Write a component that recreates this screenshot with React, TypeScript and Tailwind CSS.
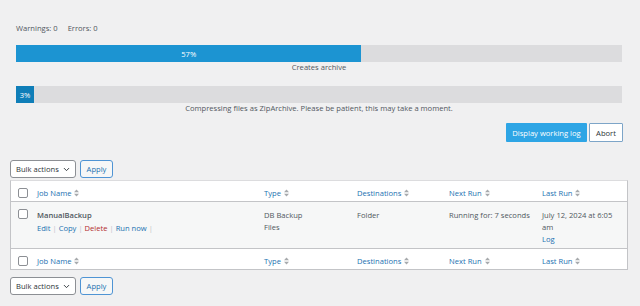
import { ChevronDown } from "lucide-react";

const cols = [
  { label: "Type", w: "w-[93px]" },
  { label: "Destinations", w: "w-[92px]" },
  { label: "Next Run", w: "w-[93px]" },
  { label: "Last Run", w: "flex-1" },
];

function SortIcon() {
  return (
    <svg width="5" height="8" viewBox="0 0 5 8" className="ml-[3px] inline-block">
      <path d="M0 3.2 L2.5 0.5 L5 3.2 Z" fill="#a7aaad" />
      <path d="M0 4.8 L2.5 7.5 L5 4.8 Z" fill="#a7aaad" />
    </svg>
  );
}

function Checkbox() {
  return (
    <span className="block w-[10px] h-[10px] border border-[#8c8f94] rounded-[2px] bg-white" />
  );
}

function BulkBar() {
  return (
    <div className="flex items-center gap-[4px] h-[18px]">
      <div className="flex items-center justify-between w-[66px] h-[18px] border border-[#8c8f94] rounded-[3px] bg-white pl-[5px] pr-[4px] text-[#2c3338]">
        <span>Bulk actions</span>
        <ChevronDown size={9} strokeWidth={2.5} />
      </div>
      <div className="flex items-center justify-center w-[33px] h-[18px] border border-[#4f94d4] rounded-[3px] bg-[#f6f7f7] text-[#2271b1]">
        Apply
      </div>
    </div>
  );
}

function HeadRow({ border }: { border: "top" | "bottom" }) {
  return (
    <div
      className={`flex items-center h-[21px] bg-white ${
        border === "bottom" ? "border-b border-[#c3c4c7]" : "border-t border-[#c3c4c7]"
      } text-[#2271b1]`}
    >
      <div className="w-[26px] pl-[7px] pt-[3px]">
        <Checkbox />
      </div>
      <div className="w-[227px] flex items-center pt-[4px]">
        Job Name
        <SortIcon />
      </div>
      {cols.map((c) => (
        <div key={c.label} className={`${c.w} flex items-center pt-[4px]`}>
          {c.label}
          <SortIcon />
        </div>
      ))}
    </div>
  );
}

export default function App() {
  return (
    <div
      className="w-[640px] h-[306px] bg-[#f0f0f1] text-[7.6px] leading-[12px] text-[#50575e] overflow-hidden"
      style={{ fontFamily: '"Open Sans", "Noto Sans", sans-serif' }}
    >
      <div className="pl-[16px] pr-[18px] pt-[22px]">
        <div className="h-[12px] flex gap-[10px]">
          <span>Warnings: 0</span>
          <span>Errors: 0</span>
        </div>
        <div className="mt-[11px] h-[17px] bg-[#dcdcde] flex">
          <div className="w-[57%] bg-[#1c94d2] text-white flex items-center justify-center">
            57%
          </div>
        </div>
        <div className="text-center h-[12px] mt-[-1px]">Creates archive</div>
        <div className="mt-[13px] h-[17px] bg-[#dcdcde] flex">
          <div className="w-[3%] bg-[#0f7eb8] text-white flex items-center justify-center">
            3%
          </div>
        </div>
        <div className="text-center h-[12px] mt-[-1px]">
          Compressing files as ZipArchive. Please be patient, this may take a moment.
        </div>
        <div className="flex justify-end gap-[2px] mt-[9px] mr-[-1px]">
          <div className="h-[19px] w-[81px] flex items-center justify-center bg-[#2ea5e5] text-white rounded-[1px]">
            Display working log
          </div>
          <div className="h-[19px] w-[34px] flex items-center justify-center bg-white border border-[#7da5c8] text-[#2c3338] rounded-[1px]">
            Abort
          </div>
        </div>
      </div>

      <div className="pl-[10px] pr-[12px] mt-[18px]">
        <BulkBar />
        <div className="mt-[2px] border border-[#c3c4c7] border-t-[#dcdcde] bg-white">
          <HeadRow border="bottom" />
          <div className="flex h-[46px] bg-[#f6f7f7] pt-[7px]">
            <div className="w-[26px] pl-[7px]">
              <Checkbox />
            </div>
            <div className="w-[227px]">
              <div className="text-[#50575e] font-semibold">ManualBackup</div>
              <div className="mt-[1px]">
                <span className="text-[#2271b1]">Edit</span>
                <span className="text-[#c3c4c7]"> | </span>
                <span className="text-[#2271b1]">Copy</span>
                <span className="text-[#c3c4c7]"> | </span>
                <span className="text-[#b32d2e]">Delete</span>
                <span className="text-[#c3c4c7]"> | </span>
                <span className="text-[#2271b1]">Run now</span>
                <span className="text-[#c3c4c7]"> |</span>
              </div>
            </div>
            <div className="w-[93px]">
              <div>DB Backup</div>
              <div>Files</div>
            </div>
            <div className="w-[92px]">Folder</div>
            <div className="w-[93px]">Running for: 7 seconds</div>
            <div className="flex-1 pr-[8px]">
              <div>July 12, 2024 at 6:05</div>
              <div>am</div>
              <div className="text-[#2271b1]">Log</div>
            </div>
          </div>
          <HeadRow border="top" />
        </div>
        <div className="mt-[7px]">
          <BulkBar />
        </div>
      </div>
    </div>
  );
}
